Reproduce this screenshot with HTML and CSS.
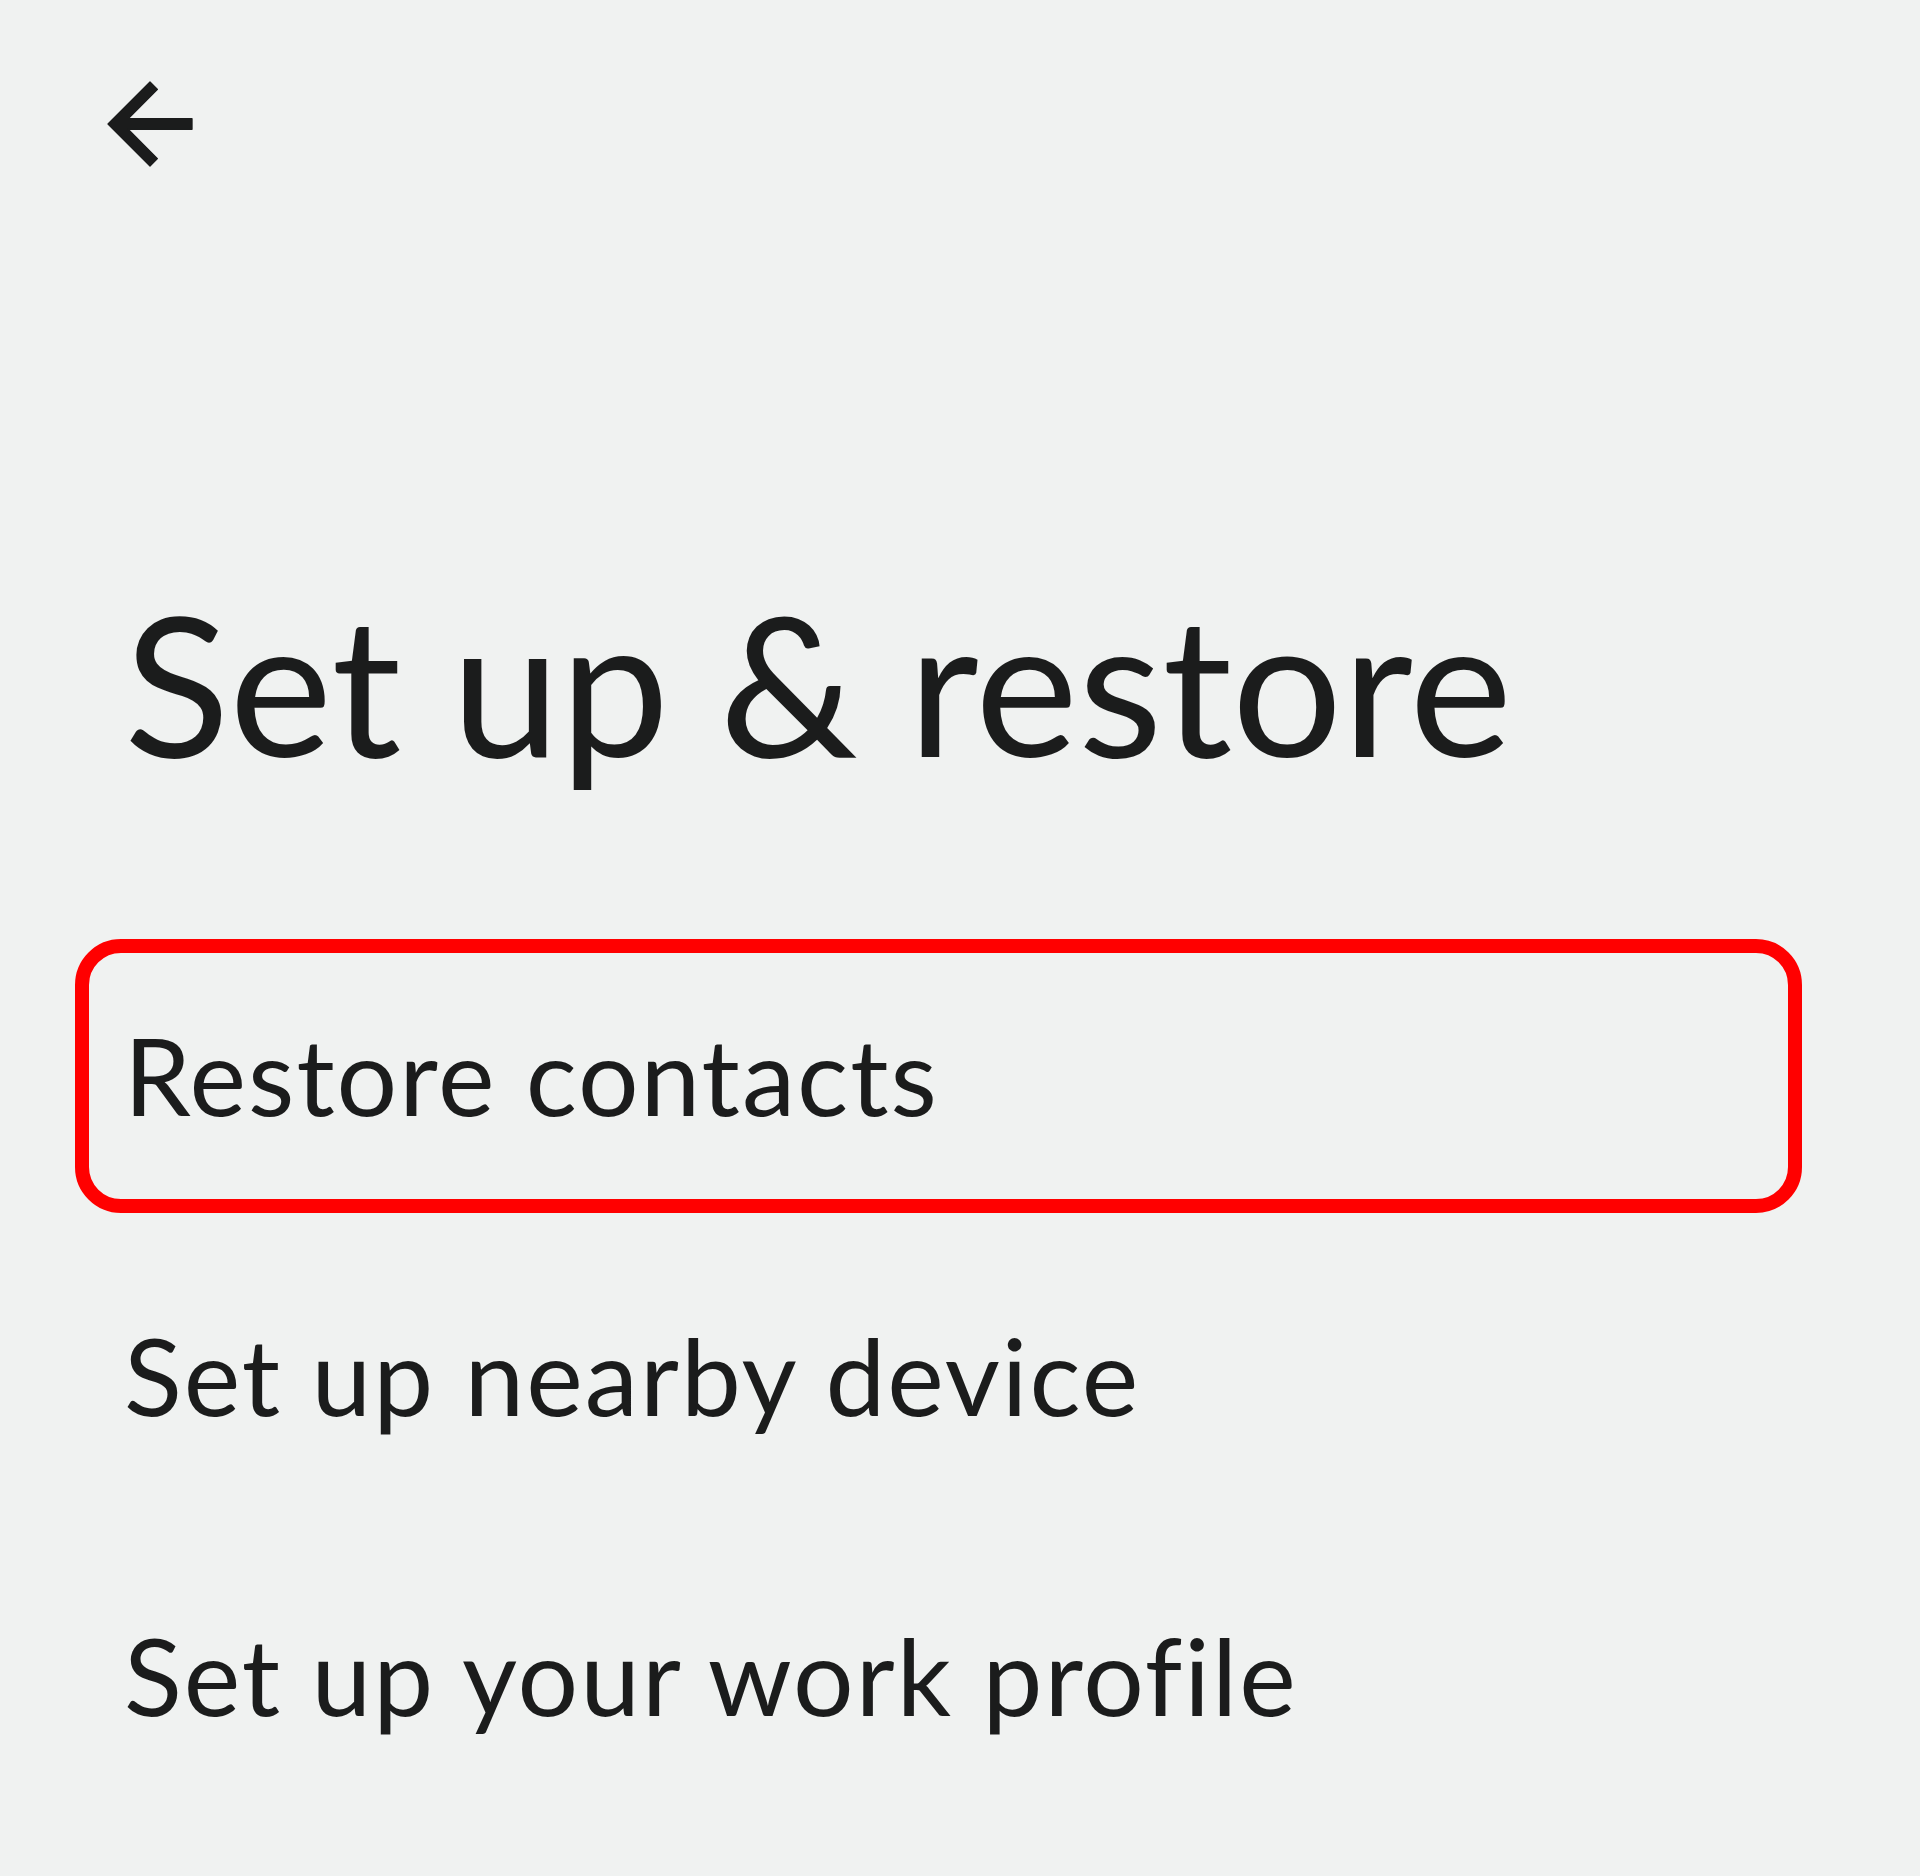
FILE: index.html
```html
<!DOCTYPE html>
<html lang="en">
<head>
<meta charset="utf-8">
<title>Set up &amp; restore</title>
<link rel="stylesheet" href="styles.css">
</head>
<body>
<div class="page">
  <div class="topbar">
    <svg class="back" viewBox="0 0 24 24" aria-label="Back"><path d="M20 11H7.83l5.59-5.59L12 4l-8 8 8 8 1.41-1.41L7.83 13H20v-2z"/></svg>
  </div>
  <h1 class="title">Set up &amp; restore</h1>
  <div class="list">
    <div class="item highlight"><span class="label">Restore contacts</span></div>
    <div class="item"><span class="label">Set up nearby device</span></div>
    <div class="item"><span class="label">Set up your work profile</span></div>
  </div>
</div>
</body>
</html>
```
FILE: styles.css
```css
html, body {
  margin: 0;
  padding: 0;
  background: #f0f2f1;
}
body {
  font-family: Lato, "Open Sans", sans-serif;
  color: #1b1c1c;
}
.page {
  padding-top: 61px;
  min-height: 1876px;
  box-sizing: border-box;
}
.topbar {
  padding-left: 87px;
  height: 126px;
}
.back {
  width: 126px;
  height: 126px;
  display: block;
  fill: #1b1c1c;
  stroke: #1b1c1c;
  stroke-width: 0.25;
  stroke-linejoin: round;
}
.title {
  margin: 398px 0 0 124px;
  font-size: 195px;
  line-height: 1;
  font-weight: 400;
}
.list {
  margin-top: 159px;
  display: flex;
  flex-direction: column;
  gap: 26px;
}
.item {
  margin-left: 75px;
  width: 1727px;
  height: 274px;
  box-sizing: border-box;
  border: 14px solid transparent;
  border-radius: 46px;
  padding: 0 0 4px 35px;
  display: flex;
  align-items: center;
}
.item.highlight {
  border-color: #ff0000;
}
.label {
  font-size: 107px;
  line-height: 1;
  letter-spacing: 2px;
}
```
